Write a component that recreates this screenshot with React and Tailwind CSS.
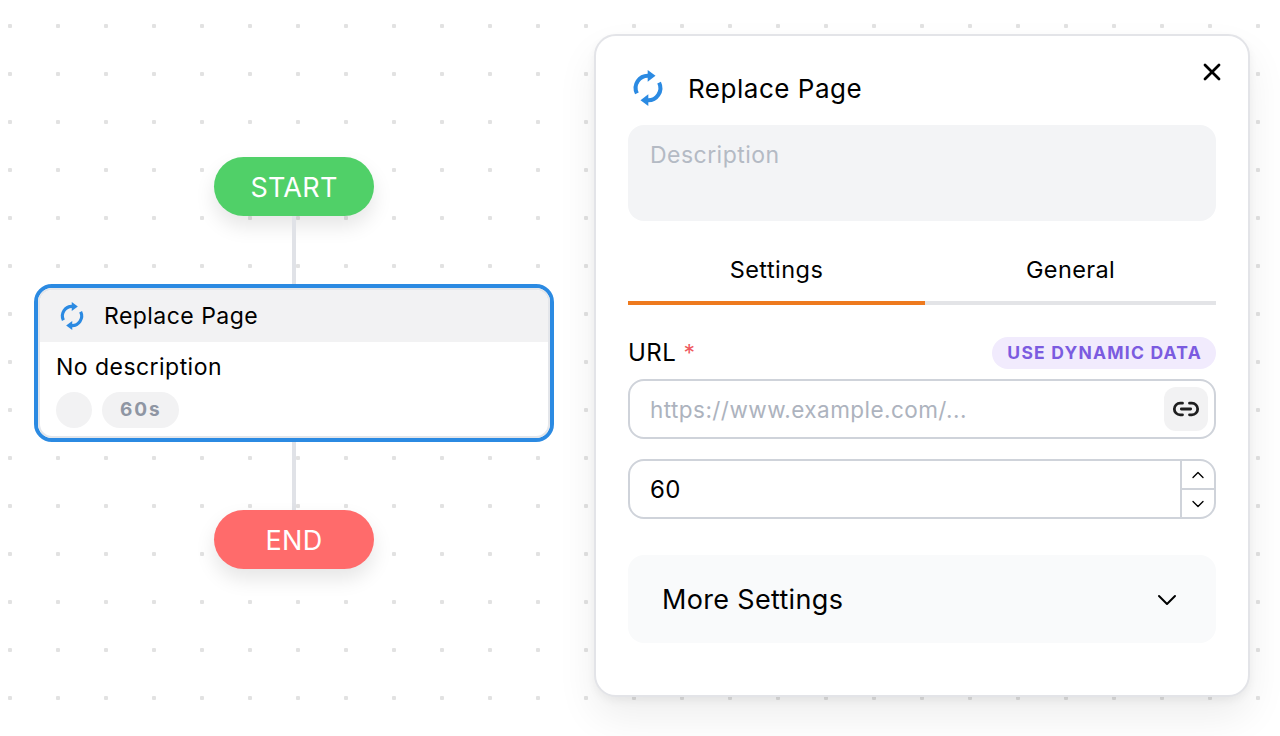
import { ChevronDown, ChevronUp, Link2, X } from 'lucide-react';

function SyncIcon({ className }) {
    return (
        <svg viewBox="0 0 24 24" className={className} fill="none">
            <path d="M4.6 15.6A8.2 8.2 0 0 1 12.5 3.8" stroke="currentColor" strokeWidth="2.7" />
            <path d="M19.4 8.4A8.2 8.2 0 0 1 11.5 20.2" stroke="currentColor" strokeWidth="2.7" />
            <path d="M11.8 0v7.8L17 3.9z" fill="currentColor" />
            <path d="M12.2 16.2V24L7 20.1z" fill="currentColor" />
        </svg>
    );
}

function FlowPill({ label, className }) {
    return (
        <div className={`flex h-[59px] w-40 items-center justify-center rounded-full pt-[4px] text-[27px] tracking-[0.01em] text-white shadow-[0_10px_20px_rgba(0,0,0,0.1)] ${className}`}>
            {label}
        </div>
    );
}

function Connector() {
    return <div className="h-[68px] w-1 bg-[#e0e2e7]" />;
}

function FlowNode() {
    return (
        <div className="w-[520px] rounded-[18px] border-4 border-[#2b8ae2] bg-white">
            <div className="overflow-hidden rounded-[14px] border-2 border-[#e4e6ea]">
                <div className="flex h-[52px] items-center gap-[18px] bg-[#f2f2f3] pl-[18px]">
                    <SyncIcon className="h-7 w-7 text-[#2b8ae2]" />
                    <span className="text-[23px] tracking-[0.02em] text-black">Replace Page</span>
                </div>
                <div className="px-4 pt-2 pb-2">
                    <p className="text-[23px] tracking-[0.02em] text-black">No description</p>
                    <div className="mt-[7px] flex items-center gap-[10px]">
                        <div className="h-9 w-9 rounded-full bg-[#f2f2f3]" />
                        <div className="flex h-9 items-center rounded-full bg-[#f2f2f3] pt-[2px] pr-[17px] pl-[18px] text-[19px] font-bold tracking-[0.1em] text-[#8f96a3]">60s</div>
                    </div>
                </div>
            </div>
        </div>
    );
}

function SettingsPanel() {
    return (
        <div className="relative h-[663px] w-[656px] rounded-[22px] border-2 border-[#e3e4e8] bg-white px-8 pt-[34px] shadow-[0_4px_8px_rgba(0,0,0,0.05),0_20px_40px_rgba(0,0,0,0.07)]">
            <button type="button" className="absolute top-[22px] right-[22px] text-black">
                <X className="h-7 w-7" strokeWidth={2.4} />
            </button>

            <div className="flex h-9 items-center gap-[22px] pl-[2px]">
                <SyncIcon className="h-9 w-9 text-[#2b8ae2]" />
                <span className="text-[26px] tracking-[0.02em] text-black">Replace Page</span>
            </div>

            <div className="mt-[19px] h-24 rounded-2xl bg-[#f3f4f6] px-[22px] pt-[13px] text-[23px] tracking-[0.02em] text-[#b4bac4]">
                Description
            </div>

            <div className="mt-[30px] flex">
                <div className="flex h-[54px] w-[297px] justify-center border-b-4 border-[#ee7a1e] pt-px text-[23.5px] tracking-[0.02em] text-black">Settings</div>
                <div className="flex h-[54px] flex-1 justify-center border-b-4 border-[#e3e4e7] pt-px text-[23.5px] tracking-[0.015em] text-black">General</div>
            </div>

            <div className="mt-[32px] flex h-8 items-center justify-between">
                <div className="pb-px text-[24px] tracking-[0.02em] text-black">
                    URL <span className="text-[23px] text-[#ef5a5f]">*</span>
                </div>
                <div className="flex h-8 items-center rounded-full bg-[#f1ebfd] pr-[14px] pl-[15px] text-[17.5px] font-bold tracking-[0.07em] text-[#7b5be0]">USE DYNAMIC DATA</div>
            </div>

            <div className="mt-[10px] flex h-[60px] items-center justify-between rounded-2xl border-2 border-[#cfd3da] pr-[6px] pl-5">
                <span className="pt-px text-[22.5px] tracking-[0.02em] text-[#adb3be]">https://www.example.com/...</span>
                <div className="flex h-11 w-11 items-center justify-center rounded-xl bg-[#f2f2f3] text-[#1f1f1f]">
                    <Link2 className="h-7 w-7" strokeWidth={2.4} />
                </div>
            </div>

            <div className="mt-5 flex h-[60px] items-stretch overflow-hidden rounded-2xl border-2 border-[#cfd3da]">
                <div className="flex flex-1 items-center pt-px pl-5 text-[24px] tracking-[0.02em] text-black">60</div>
                <div className="flex w-[34px] flex-col border-l-2 border-[#cfd3da]">
                    <div className="flex flex-1 items-center justify-center border-b-2 border-[#cfd3da]">
                        <ChevronUp className="h-5 w-5" strokeWidth={1.6} />
                    </div>
                    <div className="flex flex-1 items-center justify-center">
                        <ChevronDown className="h-5 w-5" strokeWidth={1.6} />
                    </div>
                </div>
            </div>

            <div className="mt-9 flex h-[88px] items-center justify-between rounded-2xl bg-[#f9fafb] pr-[33px] pl-[34px]">
                <span className="pt-[2px] text-[27px] tracking-[0.012em] text-black">More Settings</span>
                <ChevronDown className="mt-[2px] h-8 w-8" strokeWidth={1.5} />
            </div>
        </div>
    );
}

export default function App() {
    return (
        <div className="flex h-[736px] w-[1280px] overflow-hidden bg-white bg-[radial-gradient(circle,#e2e2e2_2px,transparent_2.5px)] bg-[length:48px_48px] bg-[position:-14px_2px] pt-[34px] pl-[34px] font-['Inter',sans-serif]">
            <div className="flex w-[520px] flex-col items-center pt-[123px]">
                <FlowPill label="START" className="bg-[#50d068]" />
                <Connector />
                <FlowNode />
                <Connector />
                <FlowPill label="END" className="bg-[#ff6b6b]" />
            </div>
            <div className="ml-10">
                <SettingsPanel />
            </div>
        </div>
    );
}
